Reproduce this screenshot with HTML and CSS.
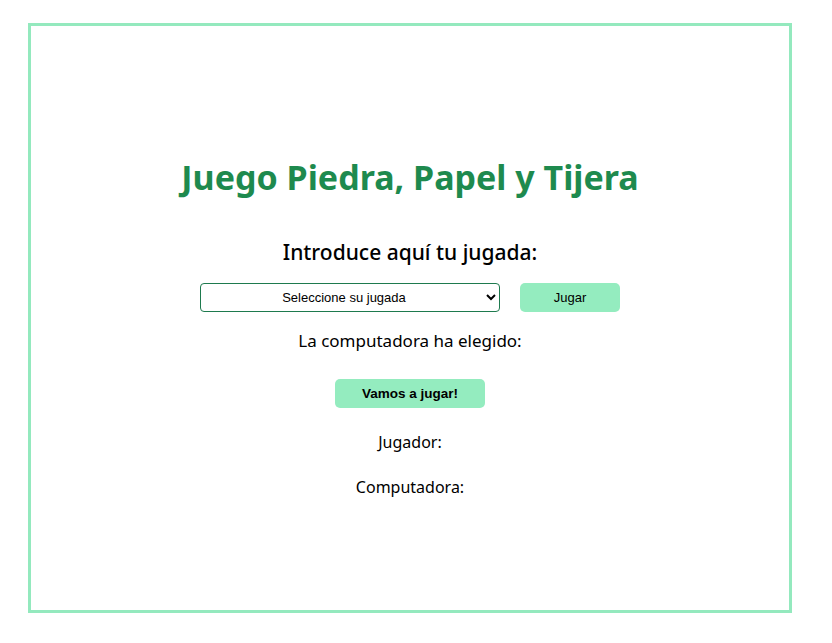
FILE: index.html
```html
<!DOCTYPE html>
<html lang="es">
<head>
<meta charset="utf-8">
<title>Juego Piedra, Papel y Tijera</title>
<link rel="stylesheet" href="styles.css">
</head>
<body>
<main class="box">
  <h1 class="title">Juego Piedra, Papel y Tijera</h1>
  <h2 class="subtitle">Introduce aquí tu jugada:</h2>
  <div class="controls">
    <select class="select">
      <option>Seleccione su jugada</option>
    </select>
    <button class="btn">Jugar</button>
  </div>
  <p class="computer">La computadora ha elegido:</p>
  <button class="btn btn-play">Vamos a jugar!</button>
  <p class="score">Jugador:</p>
  <p class="score">Computadora:</p>
</main>
</body>
</html>
```
FILE: styles.css
```css
html, body { margin: 0; padding: 0; background: #fff; }
body { padding: 23px 40px 0 28px; font-family: "Noto Sans", "Open Sans", sans-serif; color: #000; }
.box {
  width: 764px;
  height: 590px;
  box-sizing: border-box;
  border: 3px solid #94e9be;
  display: flex;
  flex-direction: column;
  align-items: center;
  padding-top: 129px;
}
.title {
  margin: 0;
  font-size: 34px;
  font-weight: 700;
  color: #1e8a4e;
  line-height: 44px;
}
.subtitle {
  margin: 39px 0 0;
  font-size: 21px;
  font-weight: 500;
  line-height: 28px;
}
.controls {
  margin-top: 17px;
  display: flex;
  gap: 20px;
}
.select {
  width: 300px;
  height: 29px;
  border: 1px solid #1e7a4e;
  border-radius: 4px;
  background: #fff;
  font-family: "Liberation Sans", Arial, sans-serif;
  font-size: 13px;
  text-align: center;
  text-align-last: center;
  color: #000;
}
.btn {
  width: 100px;
  height: 29px;
  border: none;
  border-radius: 5px;
  background: #94ecbf;
  font-family: "Liberation Sans", Arial, sans-serif;
  font-size: 13px;
  color: #000;
}
.btn-play {
  width: 150px;
  margin-top: 26px;
  font-weight: 700;
  font-size: 13.5px;
}
.computer {
  margin: 17px 0 0;
  font-size: 17px;
  line-height: 24px;
}
.score {
  margin: 23px 0 0;
  font-size: 16px;
  line-height: 22px;
}
```
